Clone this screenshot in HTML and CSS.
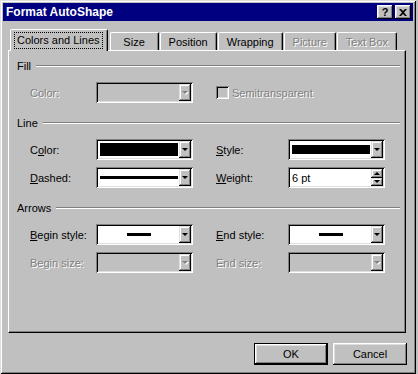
FILE: index.html
```html
<!DOCTYPE html>
<html>
<head>
    <title>Format AutoShape</title>
    <link rel="stylesheet" href="styles.css">
</head>
<body>
    <div class="window">
        <div class="titlebar">
            <span class="title">Format AutoShape</span>
            <div class="title-buttons">
                <span class="tbtn help">?</span>
                <span class="tbtn">
                    <svg width="8" height="7" viewBox="0 0 8 7"><path d="M0 0h2l2 2 2-2h2L5 3.5 8 7H6L4 5 2 7H0l3-3.5z" fill="#000"/></svg>
                </span>
            </div>
        </div>

        <div class="client">
            <!-- Tab strip -->
            <div class="tabs">
                <div class="tab selected"><span class="focus">Colors and Lines</span></div>
                <div class="tab">Size</div>
                <div class="tab">Position</div>
                <div class="tab">Wrapping</div>
                <div class="tab disabled">Picture</div>
                <div class="tab disabled">Text Box</div>
            </div>

            <div class="panel">
                <!-- Fill -->
                <div class="group-head"><span>Fill</span><span class="rule"></span></div>
                <div class="grid">
                    <span class="lbl disabled">Color:</span>
                    <div class="combo disabled">
                        <div class="field"></div>
                        <span class="drop"></span>
                    </div>
                    <div class="check-wrap">
                        <span class="checkbox"></span>
                        <span class="lbl disabled">Semitransparent</span>
                    </div>
                </div>

                <!-- Line -->
                <div class="group-head spaced"><span>Line</span><span class="rule"></span></div>
                <div class="grid">
                    <span class="lbl">C<u>o</u>lor:</span>
                    <div class="combo">
                        <div class="field"><span class="swatch"></span></div>
                        <span class="drop"></span>
                    </div>
                    <span class="lbl"><u>S</u>tyle:</span>
                    <div class="combo">
                        <div class="field"><span class="swatch thick"></span></div>
                        <span class="drop"></span>
                    </div>

                    <span class="lbl"><u>D</u>ashed:</span>
                    <div class="combo">
                        <div class="field"><span class="line-full"></span></div>
                        <span class="drop"></span>
                    </div>
                    <span class="lbl"><u>W</u>eight:</span>
                    <div class="combo spin">
                        <div class="field text">6 pt</div>
                        <div class="spin-btns">
                            <span class="sbtn up"></span>
                            <span class="sbtn down"></span>
                        </div>
                    </div>
                </div>

                <!-- Arrows -->
                <div class="group-head spaced"><span>Arrows</span><span class="rule"></span></div>
                <div class="grid">
                    <span class="lbl"><u>B</u>egin style:</span>
                    <div class="combo">
                        <div class="field center"><span class="line-short"></span></div>
                        <span class="drop"></span>
                    </div>
                    <span class="lbl"><u>E</u>nd style:</span>
                    <div class="combo">
                        <div class="field center"><span class="line-short"></span></div>
                        <span class="drop"></span>
                    </div>

                    <span class="lbl disabled">Begin size:</span>
                    <div class="combo disabled">
                        <div class="field"></div>
                        <span class="drop"></span>
                    </div>
                    <span class="lbl disabled">End size:</span>
                    <div class="combo disabled">
                        <div class="field"></div>
                        <span class="drop"></span>
                    </div>
                </div>
            </div>

            <div class="actions">
                <button class="btn default">OK</button>
                <button class="btn">Cancel</button>
            </div>
        </div>
    </div>
</body>
</html>
```

FILE: styles.css
```css
body {
    margin: 0;
    background-color: #c0c0c0;
    font-family: 'Liberation Sans', Arial, sans-serif;
    font-size: 11px;
    color: #000;
}
.window {
    width: 416px;
    height: 374px;
    box-sizing: border-box;
    padding: 3px;
    background-color: #c0c0c0;
    box-shadow: inset 1px 1px #dfdfdf, inset -1px -1px #000, inset 2px 2px #fff, inset -2px -2px #808080;
}

/* Title bar */
.titlebar {
    height: 18px;
    background-color: #000080;
    display: flex;
    align-items: center;
    justify-content: space-between;
    padding: 0 2px 0 3px;
}
.title {
    color: #fff;
    font-weight: bold;
    font-size: 12px;
}
.title-buttons {
    display: flex;
    gap: 2px;
}
.tbtn {
    width: 16px;
    height: 14px;
    box-sizing: border-box;
    background-color: #c0c0c0;
    box-shadow: inset -1px -1px #000, inset 1px 1px #fff, inset -2px -2px #808080, inset 2px 2px #dfdfdf;
    display: flex;
    align-items: center;
    justify-content: center;
}
.tbtn.help {
    font-weight: bold;
    font-size: 11px;
    line-height: 14px;
}

/* Client area */
.client {
    padding: 8px 7px 0 5px;
}
.tabs {
    display: flex;
    align-items: flex-end;
    height: 21px;
    padding-left: 2px;
}
.tab {
    height: 18px;
    min-width: 49px;
    box-sizing: border-box;
    padding: 0 8px;
    margin-right: 1px;
    display: flex;
    align-items: center;
    justify-content: center;
    background-color: #c0c0c0;
    border-left: 1px solid #fff;
    border-top: 1px solid #fff;
    border-right: 1px solid #000;
    border-radius: 2px 2px 0 0;
    box-shadow: inset -1px 0 #808080;
}
.tab.disabled {
    color: #808080;
    text-shadow: 1px 1px 0 #fff;
}
.tab.selected {
    height: 22px;
    margin-bottom: -1px;
    margin-right: 2px;
    padding: 0 5px 0 4px;
    position: relative;
    z-index: 1;
}
.focus {
    padding: 1px 2px 2px;
    outline: 1px dotted #000;
    outline-offset: 0;
}

/* Tab panel */
.panel {
    height: 283px;
    box-sizing: border-box;
    border-top: 1px solid #fff;
    border-left: 1px solid #fff;
    border-right: 1px solid #000;
    border-bottom: 1px solid #000;
    box-shadow: inset -1px -1px #808080;
    padding: 8px 5px 0 8px;
}
.group-head {
    display: flex;
    align-items: center;
    height: 14px;
    margin-bottom: 9px;
}
.group-head.spaced {
    margin-top: 13px;
}
.rule {
    flex: 1;
    height: 0;
    margin-left: 5px;
    border-top: 1px solid #808080;
    border-bottom: 1px solid #fff;
}

.grid {
    display: grid;
    grid-template-columns: 66px 120px 72px 97px;
    row-gap: 7px;
    align-items: center;
    padding-left: 13px;
}
.lbl.disabled {
    color: #808080;
    text-shadow: 1px 1px 0 #fff;
}
.check-wrap {
    grid-column: 3 / span 2;
    display: flex;
    align-items: center;
    gap: 3px;
}
.checkbox {
    width: 13px;
    height: 13px;
    box-sizing: border-box;
    box-shadow: inset 1px 1px #808080, inset -1px -1px #fff, inset 2px 2px #000, inset -2px -2px #dfdfdf;
}

/* Combo boxes */
.combo {
    width: 97px;
    height: 21px;
    box-sizing: border-box;
    padding: 2px;
    display: flex;
    box-shadow: inset 1px 1px #808080, inset -1px -1px #fff, inset 2px 2px #000, inset -2px -2px #dfdfdf;
}
.field {
    flex: 1;
    background-color: #fff;
    display: flex;
    align-items: center;
}
.combo.disabled .field {
    background-color: #c0c0c0;
}
.field.center {
    justify-content: center;
}
.field.text {
    padding-left: 2px;
}
.swatch {
    flex: 1;
    align-self: stretch;
    margin: 2px 1px 2px 2px;
    background-color: #000;
}
.swatch.thick {
    align-self: center;
    height: 9px;
}
.line-full {
    flex: 1;
    height: 3px;
    margin: 0 1px 0 2px;
    background-color: #000;
}
.line-short {
    width: 24px;
    height: 3px;
    background-color: #000;
}
.drop, .sbtn {
    width: 12px;
    background-color: #c0c0c0;
    box-shadow: inset -1px -1px #000, inset 1px 1px #dfdfdf, inset -2px -2px #808080, inset 2px 2px #fff;
    display: flex;
    align-items: center;
    justify-content: center;
}
.drop::after, .sbtn.down::after {
    content: "";
    border-left: 3px solid transparent;
    border-right: 3px solid transparent;
    border-top: 3px solid #000;
}
.sbtn.up::after {
    content: "";
    border-left: 3px solid transparent;
    border-right: 3px solid transparent;
    border-bottom: 3px solid #000;
}
.combo.disabled .drop::after {
    border-top-color: #808080;
    filter: drop-shadow(1px 1px 0 #fff);
}
.spin-btns {
    display: flex;
    flex-direction: column;
}
.sbtn {
    flex: 1;
}

/* Bottom buttons */
.actions {
    display: flex;
    justify-content: flex-end;
    gap: 5px;
    margin-top: 10px;
    margin-right: -1px;
}
.btn {
    width: 74px;
    height: 22px;
    font-family: 'Liberation Sans', Arial, sans-serif;
    font-size: 11px;
    color: #000;
    background-color: #c0c0c0;
    border: none;
    padding: 0;
    box-shadow: inset -1px -1px #000, inset 1px 1px #fff, inset -2px -2px #808080, inset 2px 2px #dfdfdf;
}
.btn.default {
    border: 1px solid #000;
}
```
